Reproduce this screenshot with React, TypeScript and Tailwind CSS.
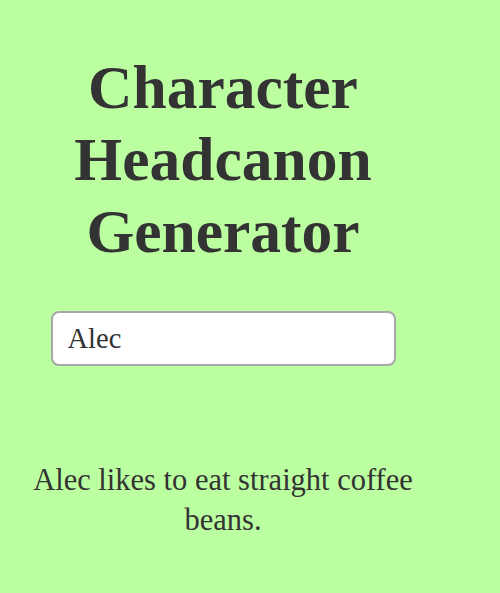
import { useState } from 'react';

const headcanons = ['likes to eat straight coffee beans.'];

export default function App() {
  const [name, setName] = useState('Alec');

  return (
    <div className="min-h-[593px] w-full bg-[#bbffa0] font-['Liberation_Serif','Times_New_Roman',serif] text-[#333333]">
      <div className="w-[446px] text-center">
        {/* Title */}
        <h1 className="pt-[51px] text-[61.5px] font-bold leading-[72px]">
          Character
          <br />
          Headcanon
          <br />
          Generator
        </h1>

        {/* Name input */}
        <div className="mt-[44px] flex justify-center">
          <input
            value={name}
            onChange={(e) => setName(e.target.value)}
            className="h-[55px] w-[345px] rounded-[8px] border-2 border-[#a8a8a8] bg-white px-[15px] font-['Liberation_Serif','Times_New_Roman',serif] text-[28.5px] text-[#333333] outline-none"
          />
        </div>

        {/* Result */}
        <p className="mx-auto mt-[94px] w-[420px] text-[30.5px] leading-[40px]">
          {name} {headcanons[0]}
        </p>
      </div>
    </div>
  );
}
